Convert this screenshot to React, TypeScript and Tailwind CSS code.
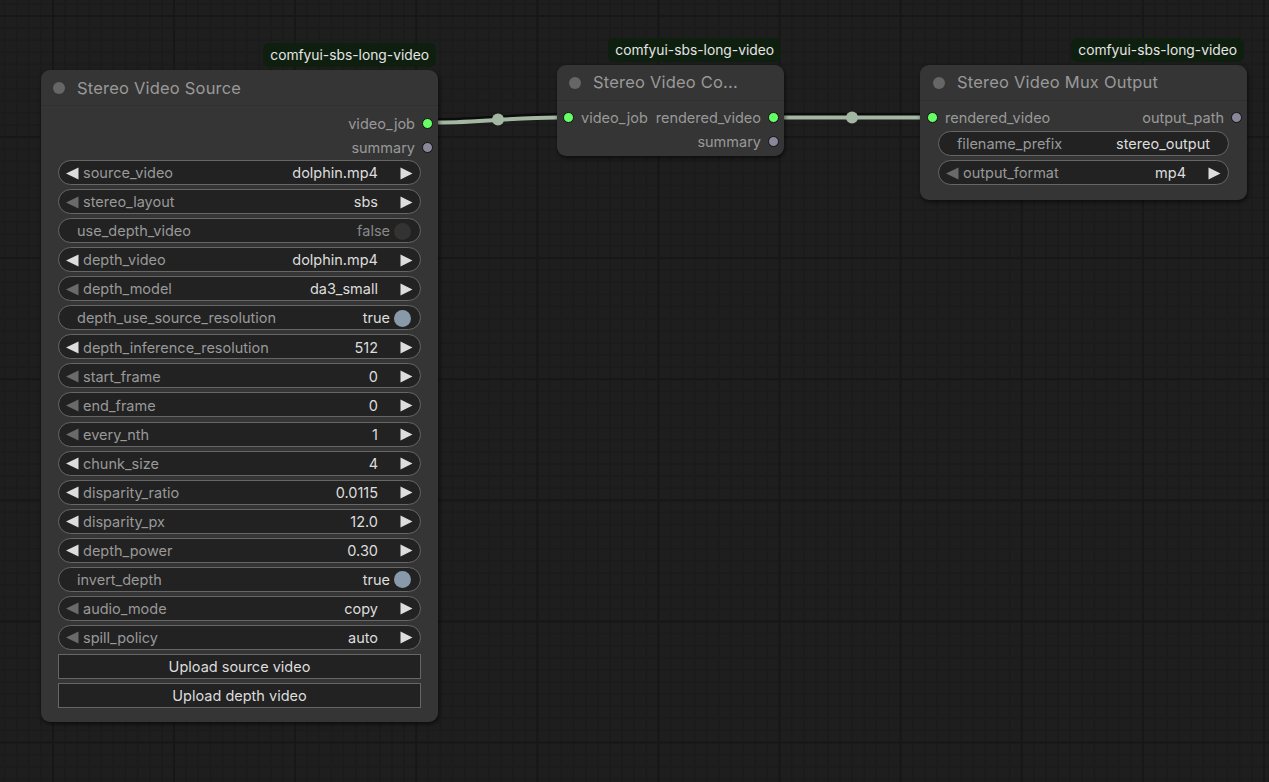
import React from "react";

const TriLeft = ({ dim }: { dim?: boolean }) => (
  <svg width="13" height="13" viewBox="0 0 13 13" className="shrink-0">
    <path d="M0 6.5 12.5 0.5V12.5Z" fill={dim ? "#6a6a6a" : "#dddddd"} />
  </svg>
);

const TriRight = () => (
  <svg width="13" height="13" viewBox="0 0 13 13" className="shrink-0">
    <path d="M12.5 6.5 0.5 0.5V12.5Z" fill="#dddddd" />
  </svg>
);

const Combo = ({ label, value, dim }: { label: string; value: string; dim?: boolean }) => (
  <div className="flex h-[25px] items-center rounded-full border border-[#666] bg-[#222] px-[7px] pt-[1px] text-[14.5px]">
    <TriLeft dim={dim} />
    <span className="ml-[4px] text-[#999]">{label}</span>
    <span className="ml-auto mr-[22px] text-[#ddd]">{value}</span>
    <TriRight />
  </div>
);

const Toggle = ({ label, value }: { label: string; value: boolean }) => (
  <div className="flex h-[25px] items-center rounded-full border border-[#666] bg-[#222] pl-[18px] pr-[9px] pt-[1px] text-[14.5px]">
    <span className="text-[#999]">{label}</span>
    <span className={value ? "ml-auto mr-[4px] text-[#ddd]" : "ml-auto mr-[4px] text-[#888]"}>{value ? "true" : "false"}</span>
    <span className={value ? "size-[17px] rounded-full bg-[#89a]" : "size-[17px] rounded-full bg-[#333]"} />
  </div>
);

const Text = ({ label, value }: { label: string; value: string }) => (
  <div className="flex h-[25px] items-center rounded-full border border-[#666] bg-[#222] px-[18px] text-[14.5px]">
    <span className="text-[#999]">{label}</span>
    <span className="ml-auto text-[#ddd]">{value}</span>
  </div>
);

const Upload = ({ label }: { label: string }) => (
  <div className="flex h-[25px] items-center justify-center border border-[#666] bg-[#222] text-[14.5px] text-[#ddd]">{label}</div>
);

const Dot = ({ on }: { on?: boolean }) => (
  <span className={on ? "size-[11px] shrink-0 rounded-full border border-[#111] bg-[#6f6]" : "size-[11px] shrink-0 rounded-full border border-[#111] bg-[#88889a]"} />
);

const Node = ({ className, tagX, headerClass, title, children }: { className: string; tagX: string; headerClass: string; title: string; children: React.ReactNode }) => (
  <div className={`absolute rounded-[9px] bg-[#353535] shadow-[1px_2px_4px_rgba(0,0,0,0.6)] ${className}`}>
    <div className={`absolute top-[-27px] flex h-[24px] items-center rounded-[6px] bg-[#0f1f0f] px-[7px] text-[13.8px] text-[#e5e5e5] ${tagX}`}>comfyui-sbs-long-video</div>
    <div className={`flex h-[36px] items-center border-b border-[#303030] text-[16.5px] tracking-[0.2px] text-[#999] ${headerClass}`}>
      <span className="mr-[12px] size-[12px] rounded-full bg-[#666]" />
      {title}
    </div>
    {children}
  </div>
);

// slot captions sit a touch under the centre of their dot
const Caption = ({ children }: { children: string }) => <span className="pt-[2px]">{children}</span>;

const OutSlot = ({ label, on }: { label: string; on?: boolean }) => (
  <div className="flex h-[24px] items-center justify-end gap-[7px] pr-[5px] text-[14.5px] text-[#999]">
    <Caption>{label}</Caption>
    <Dot on={on} />
  </div>
);

const Wire = () => (
  <svg className="absolute left-0 top-0" width="1269" height="782">
    <path d="M438 122.5 C 480 122.5, 515 117.5, 557 117.5" stroke="#000" strokeWidth="5" fill="none" transform="translate(0,-2)" opacity="0.6" />
    <path d="M783 117.5 H920" stroke="#000" strokeWidth="5" fill="none" transform="translate(0,-2)" opacity="0.6" />
    <path d="M438 122.5 C 480 122.5, 515 117.5, 557 117.5" stroke="#a3b7a3" strokeWidth="4" fill="none" />
    <path d="M783 117.5 H920" stroke="#a3b7a3" strokeWidth="4" fill="none" />
    <circle cx="498" cy="119.5" r="6" fill="#a3b7a3" />
    <circle cx="852" cy="117.5" r="6" fill="#a3b7a3" />
  </svg>
);

export default function App() {
  return (
    <div className="relative h-[782px] w-[1269px] overflow-hidden bg-[#1e1e1e] font-['Inter',sans-serif] antialiased [background-image:linear-gradient(#171717_2px,transparent_2px),linear-gradient(90deg,#171717_2px,transparent_2px),linear-gradient(#1b1b1b_2px,transparent_2px),linear-gradient(90deg,#1b1b1b_2px,transparent_2px)] [background-position:52px_15px,52px_15px,52px_15px,52px_15px] [background-size:121.1px_121.1px,121.1px_121.1px,12.11px_12.11px,12.11px_12.11px]">
      <Wire />

      <Node className="left-[41px] top-[70px] h-[652px] w-[397px]" tagX="right-[2px]" headerClass="pl-[12px] pt-[1px]" title="Stereo Video Source">
        <div className="pt-[5px]">
          <OutSlot label="video_job" on />
          <OutSlot label="summary" />
        </div>
        <div className="mt-[1.1px] flex flex-col gap-[4.06px] px-[17px]">
          <Combo label="source_video" value="dolphin.mp4" />
          <Combo label="stereo_layout" value="sbs" dim />
          <Toggle label="use_depth_video" value={false} />
          <Combo label="depth_video" value="dolphin.mp4" />
          <Combo label="depth_model" value="da3_small" dim />
          <Toggle label="depth_use_source_resolution" value />
          <Combo label="depth_inference_resolution" value="512" />
          <Combo label="start_frame" value="0" dim />
          <Combo label="end_frame" value="0" dim />
          <Combo label="every_nth" value="1" dim />
          <Combo label="chunk_size" value="4" />
          <Combo label="disparity_ratio" value="0.0115" />
          <Combo label="disparity_px" value="12.0" />
          <Combo label="depth_power" value="0.30" />
          <Toggle label="invert_depth" value />
          <Combo label="audio_mode" value="copy" dim />
          <Combo label="spill_policy" value="auto" dim />
          <Upload label="Upload source video" />
          <Upload label="Upload depth video" />
        </div>
      </Node>

      <Node className="left-[557px] top-[65px] h-[91px] w-[227px]" tagX="right-[3px]" headerClass="pl-[12px]" title="Stereo Video Co...">
        <div className="pt-[4px]">
          <div className="flex h-[24px] items-center justify-between pl-[6px] pr-[5px] text-[14.5px] text-[#999]">
            <span className="flex items-center gap-[7px]"><Dot on /><Caption>video_job</Caption></span>
            <span className="flex items-center gap-[7px]"><Caption>rendered_video</Caption><Dot on /></span>
          </div>
          <OutSlot label="summary" />
        </div>
      </Node>

      <Node className="left-[920px] top-[65px] h-[135px] w-[327px]" tagX="right-[3px]" headerClass="pl-[13px]" title="Stereo Video Mux Output">
        <div className="pt-[4px]">
          <div className="flex h-[24px] items-center justify-between pl-[7px] pr-[5px] text-[14.5px] text-[#999]">
            <span className="flex items-center gap-[7px]"><Dot on /><Caption>rendered_video</Caption></span>
            <span className="flex items-center gap-[7px]"><Caption>output_path</Caption><Dot /></span>
          </div>
        </div>
        <div className="mt-[2px] flex flex-col gap-[4px] px-[18px]">
          <Text label="filename_prefix" value="stereo_output" />
          <Combo label="output_format" value="mp4" dim />
        </div>
      </Node>
    </div>
  );
}
